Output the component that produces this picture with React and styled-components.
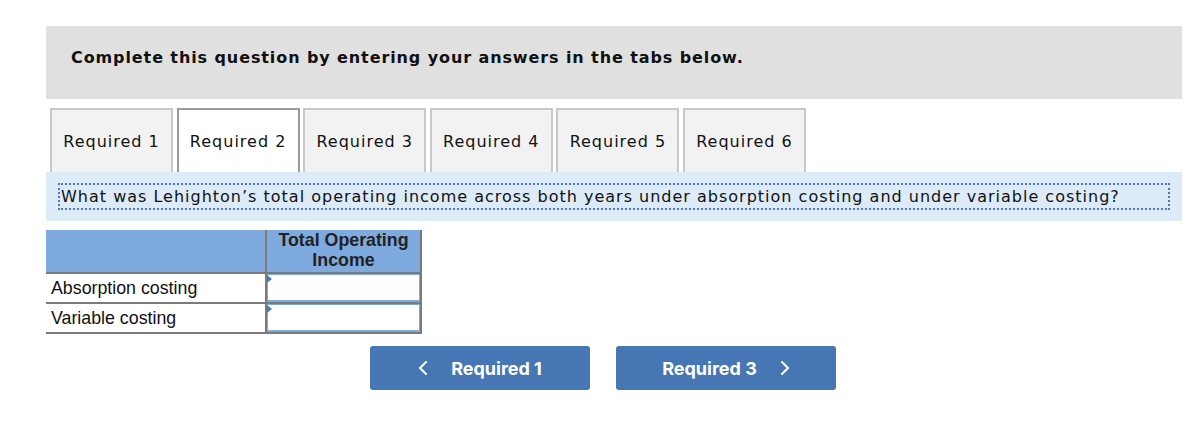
import React from "react";
import styled, { createGlobalStyle } from "styled-components";

const tabs = ["Required 1", "Required 2", "Required 3", "Required 4", "Required 5", "Required 6"];
const rows = ["Absorption costing", "Variable costing"];

const Chevron = ({ dir }) => (
  <svg width="10" height="14" viewBox="0 0 10 14" fill="none">
    <polyline
      points={dir === "left" ? "8,1 2,7 8,13" : "2,1 8,7 2,13"}
      stroke="#fff"
      strokeWidth="2"
      strokeLinecap="round"
      strokeLinejoin="round"
    />
  </svg>
);

const App = () => {
  return (
    <Page>
      <GlobalStyle />
      <Banner>Complete this question by entering your answers in the tabs below.</Banner>
      <TabRow>
        {tabs.map((t, i) => (
          <Tab key={t} active={i === 1}>{t}</Tab>
        ))}
      </TabRow>
      <Question>
        <QuestionText>
          What was Lehighton’s total operating income across both years under absorption costing and under variable costing?
        </QuestionText>
      </Question>
      <Table>
        <HeadRow>
          <LabelHead />
          <ValueHead>Total Operating<br />Income</ValueHead>
        </HeadRow>
        {rows.map((r) => (
          <Row key={r}>
            <Label>{r}</Label>
            <ValueCell>
              <Input type="text" />
              <Marker />
            </ValueCell>
          </Row>
        ))}
      </Table>
      <Nav>
        <NavButton>
          <Chevron dir="left" />
          <span>Required 1</span>
        </NavButton>
        <NavButton>
          <span>Required 3</span>
          <Chevron dir="right" />
        </NavButton>
      </Nav>
    </Page>
  );
};

export default App;

const GlobalStyle = createGlobalStyle`
  body {
    margin: 0;
    background: #fff;
    font-family: "DejaVu Sans", Verdana, sans-serif;
  }
`

const Page = styled.div`
  padding: 26px 22px 0 46px;
  width: 1136px;
`
const Banner = styled.div`
  background: #e0e0e0;
  height: 73px;
  box-sizing: border-box;
  padding: 21px 0 0 25px;
  font-weight: bold;
  font-size: 16px;
  line-height: 22px;
  letter-spacing: 0.9px;
  color: #111;
`
const TabRow = styled.div`
  display: flex;
  gap: 3.6px;
  margin-top: 9px;
  padding-left: 4px;
`
const Tab = styled.div`
  width: 123px;
  height: 64px;
  box-sizing: border-box;
  border: 2px solid ${(p) => (p.active ? "#9a9a9a" : "#c8c8c8")};
  border-bottom: none;
  background: ${(p) => (p.active ? "#fff" : "#f2f2f2")};
  display: flex;
  align-items: center;
  justify-content: center;
  font-size: 16px;
  letter-spacing: 1px;
  color: #111;
`
const Question = styled.div`
  background: #ddebf8;
  padding: 11px 12px 11px 12px;
`
const QuestionText = styled.div`
  border: 2px dotted #4a78c2;
  font-size: 16px;
  line-height: 22px;
  letter-spacing: 1px;
  color: #111;
  padding: 1px 0 0 1px;
`
const Table = styled.div`
  margin-top: 9px;
  width: 376px;
  font-family: "Liberation Sans", Arial, sans-serif;
  font-size: 17.8px;
  color: #111;
`
const HeadRow = styled.div`
  display: flex;
  height: 42px;
  background: #7eaadf;
  border-bottom: 2px solid #7a7a7a;
`
const LabelHead = styled.div`
  width: 219px;
  border-right: 2px solid #7a7a7a;
`
const ValueHead = styled.div`
  flex: 1;
  border-right: 2px solid #7a7a7a;
  text-align: center;
  font-weight: bold;
  line-height: 20px;
  color: #222;
`
const Row = styled.div`
  display: flex;
  height: 28px;
  border-bottom: 2px solid #7a7a7a;
`
const Label = styled.div`
  width: 214px;
  padding-left: 5px;
  border-right: 2px solid #7a7a7a;
  display: flex;
  align-items: center;
`
const ValueCell = styled.div`
  flex: 1;
  position: relative;
  border-right: 2px solid #7a7a7a;
  display: flex;
`
const Input = styled.input`
  flex: 1;
  margin: 0;
  border: 1px solid #7eaadf;
  border-bottom-width: 2px;
  background: #fff;
  box-sizing: border-box;
  height: 100%;
  width: 100%;
  outline: none;
`
const Marker = styled.span`
  position: absolute;
  left: 0;
  top: 1px;
  width: 0;
  height: 0;
  border-top: 4px solid transparent;
  border-bottom: 4px solid transparent;
  border-left: 5px solid #4a78c2;
`
const Nav = styled.div`
  display: flex;
  gap: 26px;
  margin-top: 12px;
  padding-left: 324px;
`
const NavButton = styled.button`
  width: 220px;
  height: 44px;
  background: #4676b4;
  border: none;
  border-radius: 3px;
  color: #fff;
  font-family: Inter, "Liberation Sans", sans-serif;
  font-weight: 700;
  font-size: 18px;
  display: flex;
  align-items: center;
  justify-content: center;
  gap: 23px;
  cursor: pointer;
`
